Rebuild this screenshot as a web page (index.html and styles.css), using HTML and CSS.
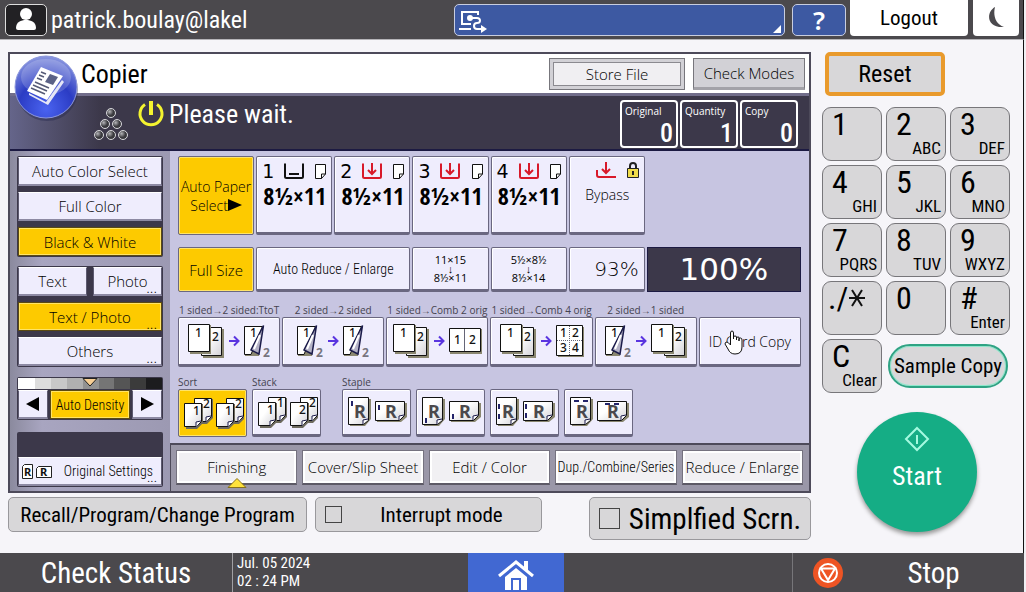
FILE: index.html
```
<!DOCTYPE html>
<html lang="en">
<head>
    <meta charset="UTF-8">
    <meta name="viewport" content="width=device-width, initial-scale=1.0">
    <title>Copier</title>
    <link rel="stylesheet" href="styles.css">
</head>
<body>
    <!-- gradients and shared icon parts -->
    <svg class="defs" width="0" height="0" aria-hidden="true">
        <defs>
            <linearGradient id="paper" x1="0" y1="0" x2="1" y2="1">
                <stop offset="0.4" stop-color="#fff"/>
                <stop offset="1" stop-color="#d4d3d8"/>
            </linearGradient>
            <radialGradient id="ball" cx="0.5" cy="0.85" r="0.9">
                <stop offset="0" stop-color="#4a63f0"/>
                <stop offset="0.5" stop-color="#2b3cc4"/>
                <stop offset="1" stop-color="#98a4e4"/>
            </radialGradient>
            <radialGradient id="bead" cx="0.35" cy="0.35" r="0.7">
                <stop offset="0" stop-color="#b5b5b8"/>
                <stop offset="0.6" stop-color="#3a3a3e"/>
            </radialGradient>
        </defs>
    </svg>
    <svg class="symbols" aria-hidden="true">
        <symbol id="two-pages" viewBox="0 0 38 36">
            <path d="M16 6h21v29H16z" fill="#8a8770"/>
            <path d="M14.500 4.500h20v28h-20z" fill="url(#paper)" stroke="#111"/>
            <path d="M3 2h21v29H3z" fill="#8a8770"/>
            <path d="M1.500 1.500h21v27h-21z" fill="#fff" stroke="#111"/>
            <text x="8" y="14">1</text>
            <text x="25" y="18">2</text>
        </symbol>
        <symbol id="flip-page" viewBox="0 0 28 36">
            <path d="M2 5h14v28H2z" fill="#8a8770"/>
            <path d="M1.500 3.500h18L8 31.500H1.500z" fill="#fff" stroke="#111"/>
            <path d="M20.500 2.500L8 27l8 4z" fill="#b4b2c6" stroke="#1b1b4a" stroke-width="1.500"/>
            <path d="M17 12L11 26" stroke="#fff" stroke-width="2"/>
            <text x="7" y="14">1</text>
            <text class="back" x="20" y="34">2</text>
        </symbol>
        <symbol id="arrow" viewBox="0 0 12 12">
            <path d="M1 6h9M6 1.500L10.500 6L6 10.500" fill="none" stroke="#5a35e0" stroke-width="2"/>
        </symbol>
        <symbol id="two-up" viewBox="0 0 34 28">
            <path d="M2 2h32v25H2z" fill="#8a8770"/>
            <path d="M1.500 1.500h31v23h-31z" fill="#fff" stroke="#111"/>
            <path d="M16.500 2v22" stroke="#667"/>
            <text x="6" y="17">1</text>
            <text x="21" y="17">2</text>
        </symbol>
        <symbol id="four-up" viewBox="0 0 30 34">
            <path d="M3 3h26v30H3z" fill="#8a8770"/>
            <path d="M1.500 1.500h26v30h-26z" fill="#fff" stroke="#111"/>
            <path d="M14.500 2v29M2 16.500h25" stroke="#667" stroke-dasharray="1 1"/>
            <text x="5" y="13">1</text>
            <text x="17" y="13">2</text>
            <text x="5" y="28">3</text>
            <text x="17" y="28">4</text>
        </symbol>
        <symbol id="sheet" viewBox="0 0 20 27">
            <path d="M3 2h17v19l-6 6H3z" fill="#6d6a5e"/>
            <path d="M1.500 1.500h17v18l-5 5h-12z" fill="url(#paper)" stroke="#111"/>
            <path d="M18 19l-5 1v5" fill="#fff" stroke="#1b1b4a"/>
        </symbol>
        <symbol id="sheets" viewBox="0 0 62 34">
            <use href="#sheet" x="11" y="1" width="20" height="27"/>
            <use href="#sheet" x="1" y="6" width="20" height="27"/>
            <use href="#sheet" x="43" y="1" width="20" height="27"/>
            <use href="#sheet" x="33" y="6" width="20" height="27"/>
        </symbol>
        <symbol id="r-pages" viewBox="0 0 60 34">
            <path d="M3 4h21v20l-6 7H3z" fill="#8a8770"/>
            <path d="M1.500 2.500h20v23l-5 4h-15z" fill="url(#paper)" stroke="#111"/>
            <path d="M21 24l-5 1v4" fill="#fff" stroke="#1b1b4a"/>
            <path d="M30 8h30v14l-6 5H30z" fill="#8a8770"/>
            <path d="M28.500 6.500h29v14l-5 5h-24z" fill="url(#paper)" stroke="#111"/>
            <path d="M57 20l-5 1v4" fill="#fff" stroke="#1b1b4a"/>
            <text class="r" x="7" y="23">R</text>
            <text class="r" x="38" y="23">R</text>
        </symbol>
        <symbol id="tray-in" viewBox="0 0 22 18">
            <path d="M2 1.500v13q0 1.500 1.500 1.500h15q1.500 0 1.500-1.500v-13" fill="none" stroke="#d8192a" stroke-width="2"/>
            <path d="M11 1v11M7 8l4 4 4-4" fill="none" stroke="#d8192a" stroke-width="2"/>
        </symbol>
        <symbol id="blank" viewBox="0 0 13 17">
            <path d="M1.500 1.500h10v9.500l-4 4.500h-6zM7.500 15.500v-4.500h4" fill="#fff" stroke="#111"/>
        </symbol>
    </svg>

    <header class="topbar">
        <button class="avatar" aria-label="User">
            <svg width="24" height="24" viewBox="0 0 24 24"><circle cx="12" cy="6" r="6" fill="#fff"/><path d="M2 20c0-6 5-8 10-8s10 2 10 8q0 2-2 2H4q-2 0-2-2z" fill="#fff"/></svg>
        </button>
        <span class="user">patrick.boulay@lakel</span>
        <button class="job-list" aria-label="Jobs">
            <svg width="30" height="24" viewBox="0 0 30 24" fill="none" stroke="#fff" stroke-width="2">
                <path d="M20 6V3H4v12h9M1 20h12"/>
                <circle cx="12" cy="9" r="2" fill="#fff"/>
                <path d="M12 9h7c4 0 4 5 0 5s-4 6 0 6h4"/>
                <path d="M23 16l6 4-6 4z" fill="#fff" stroke="none"/>
            </svg>
            <span class="corner"></span>
        </button>
        <button class="help">?</button>
        <button class="logout">Logout</button>
        <button class="sleep" aria-label="Sleep">
            <svg width="18" height="24" viewBox="0 0 18 24"><path d="M8 1C-1 6-1 22 17 21 8 18 6 9 8 1z" fill="#4b494d"/></svg>
        </button>
    </header>

    <main class="main">
        <div class="left">
            <section class="copier">
                <div class="title-row">
                    <svg class="app-icon" width="66" height="66" viewBox="0 0 66 66">
                        <circle cx="33" cy="35" r="31" fill="#22264a" opacity="0.4"/>
                        <circle cx="32" cy="32" r="31" fill="url(#ball)" stroke="#8c97dc"/>
                        <ellipse cx="32" cy="22" rx="25" ry="18" fill="#fff" opacity="0.18"/>
                        <path d="M15 38l17 9 16-22 2 2-16 23-19-10z" fill="#e4e6f6"/>
                        <path d="M27 12l22 9-16 24-20-9z" fill="#fff"/>
                        <path d="M36 19l8 3-5 8-8-3z" fill="#5b6286"/>
                        <path d="M27 17l5 2M25 20l5 2M23 23l5 2M21 27l14 6M19 30l14 6M17 33l14 6" stroke="#555a76" stroke-width="1.500"/>
                    </svg>
                    <h1>Copier</h1>
                    <button class="store"><span>Store File</span></button>
                    <button class="check-modes">Check Modes</button>
                </div>

                <div class="status-row">
                    <svg width="36" height="36" viewBox="0 0 36 36" fill="url(#bead)" stroke="#d8d8dc" stroke-width="1">
                        <circle cx="18" cy="8" r="4.500"/><circle cx="12" cy="19" r="4.500"/><circle cx="24" cy="19" r="4.500"/>
                        <circle cx="6" cy="30" r="4.500"/><circle cx="18" cy="30" r="4.500"/><circle cx="30" cy="30" r="4.500"/>
                    </svg>
                    <svg class="power" width="28" height="28" viewBox="0 0 28 28" fill="none" stroke="#f4f430" stroke-width="3">
                        <path d="M8 4.500a11 11 0 1 0 12 0"/><path d="M14 1v14" stroke-width="4"/>
                    </svg>
                    <p>Please wait.</p>
                    <div class="counters">
                        <div class="counter"><span>Original</span><b>0</b></div>
                        <div class="counter"><span>Quantity</span><b>1</b></div>
                        <div class="counter"><span>Copy</span><b>0</b></div>
                    </div>
                </div>

                <div class="panel">
                    <aside class="side">
                        <div class="group">
                            <button class="key">Auto Color Select</button>
                            <button class="key">Full Color</button>
                            <button class="key on">Black &amp; White</button>
                        </div>
                        <div class="group types">
                            <button class="key">Text</button>
                            <button class="key more">Photo</button>
                            <button class="key on more wide">Text / Photo</button>
                            <button class="key more wide">Others</button>
                        </div>
                        <div class="group density">
                            <div class="scale">
                                <svg width="16" height="9" viewBox="0 0 16 9"><path d="M1 .5h14L8 8z" fill="#f7cf95" stroke="#222"/></svg>
                            </div>
                            <button class="key" aria-label="Lighter"><svg width="14" height="14" viewBox="0 0 14 14"><path d="M13 0v14L0 7z"/></svg></button>
                            <button class="key on narrow">Auto Density</button>
                            <button class="key" aria-label="Darker"><svg width="14" height="14" viewBox="0 0 14 14"><path d="M1 0v14l13-7z"/></svg></button>
                        </div>
                        <div class="group settings">
                            <button class="key more narrow">
                                <svg width="32" height="17" viewBox="0 0 32 17" fill="#fff" stroke="#222">
                                    <path d="M3.500 1.500h8v14h-10v-12zM17.500 3.500h13v11h-15v-9z"/>
                                    <text class="tiny" x="3" y="13">R</text>
                                    <text class="tiny" x="19" y="13">R</text>
                                </svg>
                                Original Settings
                            </button>
                        </div>
                    </aside>

                    <div class="work">
                        <div class="sheet">
                            <div class="grid8 trays">
                                <button class="key on">Auto Paper<br>Select<svg width="14" height="12" viewBox="0 0 14 12"><path d="M0 0v12l14-6z"/></svg></button>
                                <button class="key tray">
                                    <span class="tray-top">1<svg width="22" height="18" viewBox="0 0 22 18" fill="none" stroke="#111" stroke-width="2"><path d="M2 1.500v13q0 1.500 1.500 1.500h15q1.500 0 1.500-1.500v-13M6 12h10"/></svg><svg width="13" height="17"><use href="#blank"/></svg></span>
                                    <strong>8½×11</strong>
                                </button>
                                <button class="key tray">
                                    <span class="tray-top">2<svg width="22" height="18"><use href="#tray-in"/></svg><svg width="13" height="17"><use href="#blank"/></svg></span>
                                    <strong>8½×11</strong>
                                </button>
                                <button class="key tray">
                                    <span class="tray-top">3<svg width="22" height="18"><use href="#tray-in"/></svg><svg width="13" height="17"><use href="#blank"/></svg></span>
                                    <strong>8½×11</strong>
                                </button>
                                <button class="key tray">
                                    <span class="tray-top">4<svg width="22" height="18"><use href="#tray-in"/></svg><svg width="13" height="17"><use href="#blank"/></svg></span>
                                    <strong>8½×11</strong>
                                </button>
                                <button class="key tray bypass">
                                    <span class="tray-top">
                                        <svg width="22" height="18" viewBox="0 0 22 18" fill="none" stroke="#d8192a" stroke-width="2"><path d="M2 9v5q0 2 2 2h17M11 1v11M7 8l4 4 4-4"/></svg>
                                        <svg width="14" height="18" viewBox="0 0 14 18"><path d="M4 8V5a3 3 0 0 1 6 0v3" fill="none" stroke="#222" stroke-width="2"/><path d="M1.500 7.500h11v9h-11z" fill="#f0dc4a" stroke="#222"/><path d="M7 10v4" stroke="#222" stroke-width="2"/></svg>
                                    </span>
                                    Bypass
                                </button>
                            </div>

                            <div class="grid8 zoom">
                                <button class="key on big">Full Size</button>
                                <button class="key span2 narrow">Auto Reduce / Enlarge</button>
                                <button class="key ratio">11×15<i>↓</i>8½×11</button>
                                <button class="key ratio">5½×8½<i>↓</i>8½×14</button>
                                <button class="key percent">93%</button>
                                <output class="span2">100%</output>
                            </div>

                            <div class="sides">
                                <label for="s1">1 sided→2 sided:TtoT</label>
                                <label for="s2">2 sided→2 sided</label>
                                <label for="s3">1 sided→Comb 2 orig</label>
                                <label for="s4">1 sided→Comb 4 orig</label>
                                <label for="s5">2 sided→1 sided</label>
                                <span></span>
                                <button class="key" id="s1"><svg width="38" height="36"><use href="#two-pages"/></svg><svg width="12" height="12"><use href="#arrow"/></svg><svg width="28" height="36"><use href="#flip-page"/></svg></button>
                                <button class="key" id="s2"><svg width="28" height="36"><use href="#flip-page"/></svg><svg width="12" height="12"><use href="#arrow"/></svg><svg width="28" height="36"><use href="#flip-page"/></svg></button>
                                <button class="key" id="s3"><svg width="38" height="36"><use href="#two-pages"/></svg><svg width="12" height="12"><use href="#arrow"/></svg><svg width="34" height="28"><use href="#two-up"/></svg></button>
                                <button class="key" id="s4"><svg width="38" height="36"><use href="#two-pages"/></svg><svg width="12" height="12"><use href="#arrow"/></svg><svg width="30" height="34"><use href="#four-up"/></svg></button>
                                <button class="key" id="s5"><svg width="28" height="36"><use href="#flip-page"/></svg><svg width="12" height="12"><use href="#arrow"/></svg><svg width="38" height="36"><use href="#two-pages"/></svg></button>
                                <button class="key id-card">ID Card Copy
                                    <svg class="hand" width="20" height="25" viewBox="0 0 20 25"><path d="M6.500 15V3q0-2 1.500-2t1.500 2v6V7q0-1 1.500-1t1.500 1v3-2q0-1 1.500-1T15 8v3-2q0-1 1.500-1T18 10v7q0 7-7 7-5 0-7-5l-3-5q0-2 2-2 1 0 3.500 3z" fill="#fff" stroke="#111"/></svg>
                                </button>
                            </div>

                            <div class="finish">
                                <div><label for="f1">Sort</label><button class="key on" id="f1"><svg width="62" height="34" viewBox="0 0 62 34"><use href="#sheets"/><text x="21" y="12">2</text><text x="11" y="19">1</text><text x="53" y="12">2</text><text x="43" y="19">1</text></svg></button></div>
                                <div><label for="f2">Stack</label><button class="key" id="f2"><svg width="62" height="34" viewBox="0 0 62 34"><use href="#sheets"/><text x="21" y="12">1</text><text x="11" y="19">1</text><text x="53" y="12">2</text><text x="43" y="19">2</text></svg></button></div>
                                <div class="staple"><label for="f3">Staple</label><button class="key" id="f3"><svg width="60" height="34" viewBox="0 0 60 34"><use href="#r-pages"/><path class="pin" d="M5 6v5M32 10v5"/></svg></button></div>
                                <div><button class="key" aria-label="Staple bottom"><svg width="60" height="34" viewBox="0 0 60 34"><use href="#r-pages"/><path class="pin" d="M5 23v5M32 19v5"/></svg></button></div>
                                <div><button class="key" aria-label="Staple left"><svg width="60" height="34" viewBox="0 0 60 34"><use href="#r-pages"/><path class="pin" d="M4 9v5M4 19v5M31 9v5M31 18v5"/></svg></button></div>
                                <div><button class="key" aria-label="Staple top"><svg width="60" height="34" viewBox="0 0 60 34"><use href="#r-pages"/><path class="pin" d="M5 6h5M14 6h5M36 9h5M45 9h5"/></svg></button></div>
                            </div>
                        </div>

                        <nav class="tabs">
                            <button>Finishing
                                <svg width="20" height="10" viewBox="0 0 20 10"><path d="M10 .5L19 9.500H1z" fill="#ffe23c" stroke="#87701c"/></svg>
                            </button>
                            <button>Cover/Slip Sheet</button>
                            <button>Edit / Color</button>
                            <button class="narrow">Dup./Combine/Series</button>
                            <button>Reduce / Enlarge</button>
                        </nav>
                    </div>
                </div>
            </section>

            <div class="shortcuts">
                <button class="recall">Recall/Program/Change Program</button>
                <label class="interrupt"><input type="checkbox"><span>Interrupt mode</span></label>
                <label class="simple"><input type="checkbox"><span>Simplfied Scrn.</span></label>
            </div>
        </div>

        <aside class="pad">
            <button class="reset">Reset</button>
            <div class="keys">
                <button>1</button>
                <button>2<small>ABC</small></button>
                <button>3<small>DEF</small></button>
                <button>4<small>GHI</small></button>
                <button>5<small>JKL</small></button>
                <button>6<small>MNO</small></button>
                <button>7<small>PQRS</small></button>
                <button>8<small>TUV</small></button>
                <button>9<small>WXYZ</small></button>
                <button class="star">./<svg width="18" height="20" viewBox="0 0 18 20" stroke="#111" stroke-width="2"><path d="M1 9h16M4 1l10 16M14 1L4 17"/></svg></button>
                <button>0</button>
                <button>#<small>Enter</small></button>
                <button>C<small>Clear</small></button>
                <button class="sample">Sample Copy</button>
            </div>
            <button class="start">
                <svg width="26" height="26" viewBox="0 0 26 26" fill="none" stroke="#a5fae0" stroke-width="2"><path d="M13 2l11 11-11 11L2 13zM13 9v9"/></svg>
                Start
            </button>
        </aside>
    </main>

    <footer class="bottombar">
        <button class="check-status">Check Status</button>
        <div class="clock">Jul. 05 2024<br>02 : 24 PM</div>
        <button class="home" aria-label="Home">
            <svg width="38" height="32" viewBox="0 0 38 32"><path d="M2 17L19 3l17 14" fill="none" stroke="#fff" stroke-width="3"/><path d="M27 2h4v10l-4-4zM8 18L19 9l11 9v13h-6V19H14v12H8zM16 21h6v10h-6z" fill="#fff"/></svg>
        </button>
        <button class="stop">
            <svg width="30" height="30" viewBox="0 0 30 30" fill="none" stroke="#fff" stroke-width="2"><circle cx="15" cy="15" r="15" fill="#ee5424" stroke="none"/><circle cx="15" cy="15" r="9"/><path d="M8 10.500h14L15 22z"/></svg>
            <span>Stop</span>
        </button>
    </footer>
</body>
</html>
```
FILE: styles.css
```
* { box-sizing: border-box; }
body {
    margin: 0;
    min-height: 100vh;
    display: flex;
    flex-direction: column;
    background: #f6f5f9;
    border-right: 2px solid #f0eff3;
    font-family: "Roboto Condensed", "Noto Sans", sans-serif;
    color: #000;
}
button {
    font: inherit;
    color: inherit;
    margin: 0;
    padding: 0;
    border: 0;
    cursor: pointer;
    white-space: nowrap;
}
svg { flex: none; }
.defs { position: absolute; }
.symbols { display: none; }
svg text {
    font-family: "Noto Sans", sans-serif;
    font-size: 12px;
    font-weight: 500;
    fill: #111;
    stroke: none;
}
svg text.back { font-weight: bold; fill: #77757f; }
svg text.r { font-size: 18px; font-weight: bold; fill: #4b494d; }
svg text.tiny { font-size: 11px; font-weight: bold; }
.pin { stroke: #24246a; stroke-width: 2; }

/* top bar */
.topbar {
    display: flex;
    align-items: center;
    height: 40px;
    padding: 0 4px 0 5px;
    background: #4b494d;
    border-right: 1px solid #111;
    border-bottom: 1px solid #b5b4b8;
}
.avatar {
    width: 42px;
    height: 32px;
    background: #222124;
    border: 1px solid #ddd;
    border-radius: 5px;
    display: grid;
    place-items: center;
}
.user { color: #fff; font-size: 24px; margin-left: 4px; flex: 1; }
.job-list {
    width: 331px;
    height: 32px;
    padding: 2px 3px;
    background: #3d59a2;
    border: 1px solid #c8cde0;
    border-radius: 5px;
    display: flex;
    justify-content: space-between;
    align-items: flex-end;
}
.corner { border: 4px solid transparent; border-right-color: #fff; border-bottom-color: #fff; }
.help {
    width: 54px;
    height: 32px;
    margin: 0 4px 0 7px;
    background: #3d59a2;
    border: 1px solid #c8cde0;
    border-radius: 5px;
    color: #fff;
    font: 600 26px/28px "Noto Sans", sans-serif;
}
.logout, .sleep {
    align-self: flex-start;
    height: 36px;
    background: #fff;
    border-radius: 0 0 4px 4px;
}
.logout { width: 118px; font-size: 21px; margin-right: 5px; }
.sleep { width: 46px; display: grid; place-items: center; }

/* main area */
.main {
    flex: 1;
    display: flex;
    gap: 11px;
    padding: 12px 13px 0 8px;
    border-right: 1px solid #111;
}
.left { flex: 1; min-width: 0; display: flex; flex-direction: column; gap: 4px; }
.copier { border: 2px solid #4d4a5a; background: #c7c5e1; font-family: "Open Sans", sans-serif; font-size: 14px; }
.title-row {
    position: relative;
    display: flex;
    align-items: center;
    gap: 8px;
    height: 39px;
    padding: 0 4px 0 71px;
    background: #fff;
}
.app-icon { position: absolute; left: 4px; top: 1px; z-index: 1; }
h1 { margin: 0; flex: 1; font: 26px "Roboto Condensed", "Noto Sans", sans-serif; }
.store, .check-modes { height: 32px; border: 1px solid #77767c; font-size: 15px; font-weight: 300; }
.store { width: 136px; padding: 3px; background: #d2d1d6; }
.store span { display: block; border: 1px solid #8b8a90; background: #f0eff2; line-height: 22px; }
.check-modes { width: 112px; background: #d2d1d6; border-bottom: 3px solid #a3a2a8; }
.status-row {
    display: flex;
    align-items: center;
    height: 58px;
    padding: 0 11px 0 83px;
    color: #fff;
    border-top: 3px solid #716d8a;
    border-bottom: 2px solid #1c1a42;
    background: linear-gradient(90deg, #65658a, #3c384a 90px);
}
.power { align-self: flex-start; margin: 4px 4px 0 8px; }
.status-row p { margin: 0 0 18px; flex: 1; font: 26px/32px "Roboto Condensed", "Noto Sans", sans-serif; }
.counters { display: flex; gap: 2px; margin-top: 3px; }
.counter {
    width: 58px;
    height: 48px;
    padding: 1px 3px;
    border: 2px solid #fff;
    border-radius: 4px;
    display: flex;
    flex-direction: column;
    font-size: 10px;
    line-height: 17px;
}
.counter b { font: 500 26px/26px "Roboto Condensed", "Noto Sans", sans-serif; text-align: right; }

.panel { display: flex; }
.side {
    width: 160px;
    padding: 5px 7px 3px;
    display: flex;
    flex-direction: column;
    gap: 9px;
    background: linear-gradient(90deg, #8b8a9e, #a8a5c0 20%, #9c99b2);
    font-size: 15px;
}
.group { background: #3c384a; display: grid; gap: 6px; padding: 1px; border-radius: 2px; }
.key {
    position: relative;
    min-width: 0;
    background: #efedfd;
    border: 1px solid #5d5a70;
    border-top-color: #fff;
    border-bottom: 2px solid #8d8aa3;
    font-weight: 300;
}
.key.on { background: #fdca00; border: 1px solid #5b4a10; box-shadow: inset 0 0 0 1px #ffe468; }
.group .key { height: 29px; }
.key.narrow, .tabs .narrow { font-family: "Roboto Condensed", "Noto Sans", sans-serif; font-size: 14px; }
.more::after { content: "..."; position: absolute; right: 4px; bottom: 0; line-height: 14px; }
.types { grid-template-columns: 1fr 1fr; }
.types .wide { grid-column: span 2; }
.density { grid-template-columns: 30px 1fr 30px; gap: 1px 2px; margin-top: 1px; }
.density .key { display: grid; place-items: center; }
.scale {
    grid-column: span 3;
    height: 11px;
    display: flex;
    justify-content: center;
    background: linear-gradient(90deg, #fff 12%, #ddd 12% 23%, #c8c8c8 23% 34%, #b0b0b0 34% 45%, #929292 45% 56%, #757575 56% 67%, #555 67% 78%, #3b3b3b 78% 89%, #1c1c1e 89%);
}
.settings { margin-top: 3px; padding-top: 25px; }
.settings .key { display: flex; align-items: center; justify-content: space-between; padding: 0 8px 0 2px; }

.work { flex: 1; min-width: 0; display: flex; flex-direction: column; }
.sheet { flex: 1; padding: 5px 8px 6px; }
.grid8 { display: grid; grid-template-columns: repeat(8, 1fr); gap: 2px; }
.span2 { grid-column: span 2; }
.sheet .key { border-color: #6a6780; box-shadow: inset 1px 1px 0 #fff; border-bottom: 3px solid #6a6780; border-radius: 2px; }
.sheet .key.on { border-bottom-width: 1px; box-shadow: inset 0 0 0 1px #ffe468; }
.big { font-size: 15px; }
.trays { height: 79px; margin-bottom: 12px; }
.tray { display: flex; flex-direction: column; padding: 4px 4px 0 5px; }
.tray-top { display: flex; width: 100%; justify-content: space-between; align-items: center; font: 19px/20px "DejaVu Sans", sans-serif; }
.tray strong { width: 100%; text-align: center; font: bold 24px/30px "Open Sans Condensed", "Roboto Condensed", sans-serif; }
.bypass { align-items: center; }
.bypass .tray-top { padding-left: 20px; margin-bottom: 6px; }
.zoom { height: 45px; margin-bottom: 12px; }
.key.ratio { font-size: 11px; font-weight: 400; line-height: 10px; }
.ratio i { display: block; font-style: normal; line-height: 8px; }
.key.percent { font: 200 20px "DejaVu Sans", sans-serif; text-align: right; padding-right: 5px; }
.zoom output {
    background: #3c384a;
    border: 1px solid #1c1a42;
    color: #fff;
    text-align: center;
    font: 31px/43px "DejaVu Sans", sans-serif;
}
.sides { display: grid; grid-template-columns: repeat(6, 1fr); grid-template-rows: 13px 50px; column-gap: 2px; margin-bottom: 9px; }
.sheet label { display: block; font-size: 10px; line-height: 13px; height: 13px; color: #45434f; white-space: nowrap; }
.sides label { text-align: center; }
.sides .key { display: flex; justify-content: center; align-items: center; gap: 3px; }
.hand { position: absolute; left: 24px; top: 12px; }
.finish { display: flex; align-items: flex-end; gap: 5px; }
.finish .key { width: 69px; height: 48px; display: grid; place-items: center; }
.staple { margin-left: 16px; }

.tabs {
    display: grid;
    grid-template-columns: repeat(5, 1fr);
    gap: 5px;
    padding: 5px 6px 6px 5px;
    border-top: 2px solid #4d4a5a;
    border-left: 1px solid #4d4a5a;
    background: #9a97a8;
    font-size: 15px;
}
.tabs button {
    position: relative;
    min-width: 0;
    height: 35px;
    background: #f1f0f3;
    border: 1px solid #75727f;
    border-bottom: 2px solid #5d5a66;
    box-shadow: inset 0 0 0 2px #fff;
    font-weight: 300;
}
.tabs svg { position: absolute; left: 50%; bottom: -5px; margin-left: -10px; }

/* buttons under the copier screen */
.shortcuts { display: flex; align-items: flex-start; font-size: 21px; }
.shortcuts button, .shortcuts label {
    height: 35px;
    background: #d8d7d9;
    border: 1px solid #99989c;
    border-radius: 5px;
    display: flex;
    align-items: center;
    justify-content: center;
}
.shortcuts .recall { width: 299px; }
.shortcuts label { padding-left: 9px; }
.shortcuts span { flex: 1; text-align: center; white-space: nowrap; }
.shortcuts input { appearance: none; margin: 0; width: 17px; height: 17px; border: 1px solid #444; }
.shortcuts .interrupt { width: 227px; margin-left: 8px; }
.shortcuts .simple { width: 222px; height: 43px; margin-left: auto; font-size: 29px; }
.shortcuts .simple input { width: 21px; height: 21px; }

/* keypad */
.pad { width: 188px; display: flex; flex-direction: column; }
.reset {
    width: 120px;
    height: 44px;
    margin: 0 3px 11px;
    background: #d8d7d9;
    border: 4px solid #e99a2c;
    border-radius: 5px;
    font-size: 24px;
}
.keys { display: grid; grid-template-columns: repeat(3, 60px); grid-auto-rows: 54px; gap: 4px; }
.keys button {
    position: relative;
    background: #d8d7d9;
    border: 1px solid #77767a;
    border-radius: 9px;
    padding: 0 0 20px 9px;
    text-align: left;
    font-size: 32px;
    line-height: 32px;
}
.keys small { position: absolute; right: 4px; bottom: 2px; font-size: 17px; line-height: 20px; }
.keys .star { padding-left: 5px; }
.keys .sample {
    grid-column: span 2;
    align-self: center;
    width: 120px;
    height: 44px;
    margin-left: 2px;
    padding: 0;
    border: 2px solid #2fa384;
    border-radius: 22px;
    box-shadow: inset 0 0 0 1px #8de8cc;
    text-align: center;
    font-size: 21px;
}
.start {
    width: 120px;
    height: 120px;
    margin: 19px 0 0 35px;
    border-radius: 50%;
    background: #15ad85;
    color: #fff;
    box-shadow: 0 3px 4px #999;
    font-size: 26px;
    line-height: 36px;
    display: flex;
    flex-direction: column;
    align-items: center;
    padding-top: 14px;
    gap: 6px;
}

/* bottom bar */
.bottombar {
    display: flex;
    height: 39px;
    background: #4b494d;
    color: #fff;
}
.bottombar button { background: none; }
.check-status { width: 232px; font-size: 29px; line-height: 36px; }
.clock { width: 236px; padding: 1px 4px; font-size: 15px; line-height: 18px; border-left: 1px solid #a09fa3; }
.bottombar .home { width: 96px; background: #4168d2; display: grid; place-items: center; padding-top: 4px; }
.bottombar .stop {
    width: 232px;
    margin-left: auto;
    border-left: 1px solid #77767a;
    display: flex;
    align-items: center;
    padding-left: 20px;
    font-size: 29px;
}
.stop span { flex: 1; }
```
